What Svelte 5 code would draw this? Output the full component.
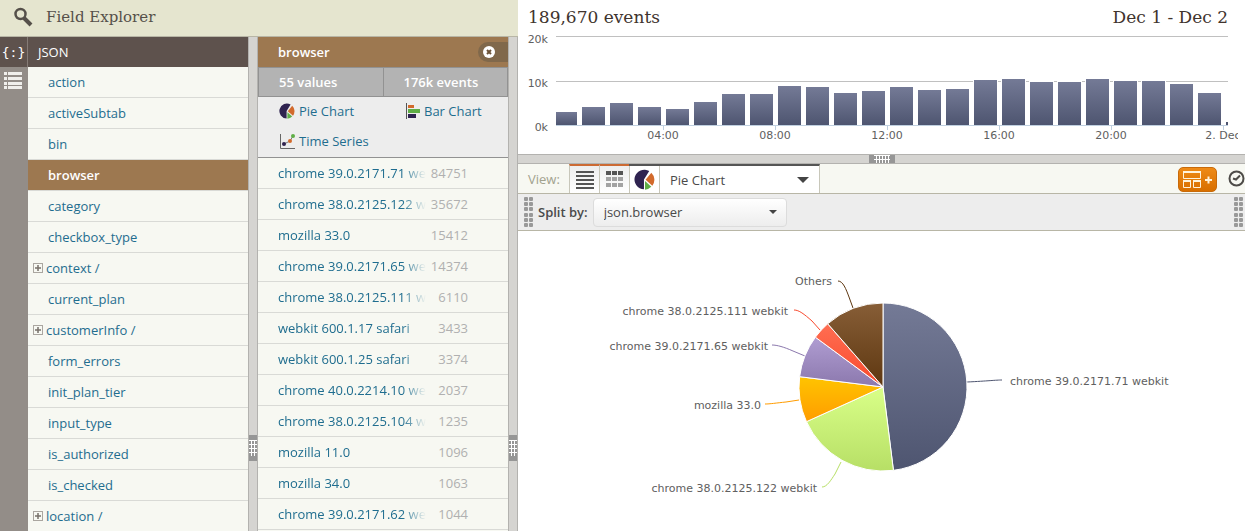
<script lang="ts">
  type Field = { name: string; group?: boolean };

  const fields: Field[] = [
    { name: "action" },
    { name: "activeSubtab" },
    { name: "bin" },
    { name: "browser" },
    { name: "category" },
    { name: "checkbox_type" },
    { name: "context /", group: true },
    { name: "current_plan" },
    { name: "customerInfo /", group: true },
    { name: "form_errors" },
    { name: "init_plan_tier" },
    { name: "input_type" },
    { name: "is_authorized" },
    { name: "is_checked" },
    { name: "location /", group: true },
  ];

  const values: [string, number][] = [
    ["chrome 39.0.2171.71 webkit", 84751],
    ["chrome 38.0.2125.122 webkit", 35672],
    ["mozilla 33.0", 15412],
    ["chrome 39.0.2171.65 webkit", 14374],
    ["chrome 38.0.2125.111 webkit", 6110],
    ["webkit 600.1.17 safari", 3433],
    ["webkit 600.1.25 safari", 3374],
    ["chrome 40.0.2214.10 webkit", 2037],
    ["chrome 38.0.2125.104 webkit", 1235],
    ["mozilla 11.0", 1096],
    ["mozilla 34.0", 1063],
    ["chrome 39.0.2171.62 webkit", 1044],
  ];

  let selected = $state("browser");

  // bar heights in chart units, one bar per hour
  const hours = [13, 18, 22, 18, 16, 23, 31, 31, 39, 38, 32, 34, 38, 35, 36, 45, 46, 43, 43, 46, 44, 44, 41, 32];
  const ticks = ["04:00", "08:00", "12:00", "16:00", "20:00", "2. Dec"];

  const total = 176500;
  const slices = [
    { name: "chrome 39.0.2171.71 webkit", n: 84751, from: "#747a96", to: "#4e5570", x: 492, y: 154, anchor: "start", line: "M484 149 C478 149 470 150 449 151" },
    { name: "chrome 38.0.2125.122 webkit", n: 35672, from: "#d9ff88", to: "#b7df66", x: 299, y: 261, anchor: "end", line: "M304 256 C309 256 313 249 317 243 L323 231" },
    { name: "mozilla 33.0", n: 15412, from: "#ffc400", to: "#ff9c00", x: 243, y: 178, anchor: "end", line: "M247 173 C252 173 258 172 268 171 L281 169" },
    { name: "chrome 39.0.2171.65 webkit", n: 14374, from: "#b09dd2", to: "#8b78ad", x: 250, y: 119, anchor: "end", line: "M254 114 C259 114 266 116 275 120 L287 125" },
    { name: "chrome 38.0.2125.111 webkit", n: 6110, from: "#ff6e52", to: "#f9492d", x: 270, y: 84, anchor: "end", line: "M276 79 C281 79 286 83 294 90 L302 99" },
    { name: "Others", n: 20181, from: "#875e37", to: "#5e3710", x: 314, y: 54, anchor: "end", line: "M320 50 C325 50 328 58 331 66 L335 77" },
  ];

  const cx = 365;
  const cy = 156;
  const r = 84;

  function point(n: number): string {
    const a = (n / total) * Math.PI * 2;
    return `${cx + r * Math.sin(a)} ${cy - r * Math.cos(a)}`;
  }

  const wedges = $derived.by(() => {
    let sum = 0;
    return slices.map((s) => {
      const start = sum;
      sum += s.n;
      return { ...s, d: `M${cx} ${cy} L${point(start)} A${r} ${r} 0 0 1 ${point(sum)} Z` };
    });
  });
</script>

{#snippet pieIcon()}
  <svg class="pie-icon" viewBox="0 0 20 20" aria-hidden="true">
    <path d="M9.500 10 L14.500 2 A9.300 9.300 0 1 0 9.500 19.300 Z" fill="#2f2350" />
    <path d="M11 10.300 L16.500 3.500 A9.500 9.500 0 0 1 17.500 16 Z" fill="#d26a2c" />
    <path d="M10.500 11.500 L16.500 17 A9.500 9.500 0 0 1 10.500 19.700 Z" fill="#5fae46" />
  </svg>
{/snippet}

{#snippet grip()}
  <svg class="grip" width="10" height="32" viewBox="0 0 10 32" aria-hidden="true">
    {#each [1, 6, 11, 17, 22, 27] as y}
      <rect x="0" {y} width="4" height="4" rx="1" />
      <rect x="5" {y} width="4" height="4" rx="1" />
    {/each}
  </svg>
{/snippet}

<div class="app">
  <section class="explorer">
    <header class="explorer-head">
      <svg width="20" height="20" viewBox="0 0 20 20" fill="none" stroke="#55504a" aria-hidden="true">
        <circle cx="6.500" cy="7" r="5" stroke-width="2.500" />
        <path d="M10 11 L17 18" stroke-width="4" />
      </svg>
      <h1>Field Explorer</h1>
    </header>

    <div class="panes">
      <nav class="rail">
        <button class="json-tab" aria-label="JSON fields">&#123;:&#125;</button>
        <button class="list-tab" aria-label="Event list">
          <svg width="18" height="17" viewBox="0 0 18 17" fill="#f0efec">
            {#each [0, 5, 10, 14] as y}
              <rect x="0" {y} width="3" height="3" />
              <rect x="4" {y} width="14" height="3" />
            {/each}
          </svg>
        </button>
      </nav>

      <div class="fields">
        <h2>JSON</h2>
        <ul>
          {#each fields as field}
            <li class:active={field.name === selected}>
              <button class="field" class:group={field.group} onclick={() => (selected = field.name)}>
                {#if field.group}
                  <svg width="10" height="10" viewBox="0 0 10 10" fill="none" aria-hidden="true">
                    <rect x=".5" y=".5" width="9" height="9" stroke="#aaa6a0" />
                    <path d="M2 5 H8 M5 2 V8" stroke="#77706a" stroke-width="1.5" />
                  </svg>
                {/if}
                {field.name}
              </button>
            </li>
          {/each}
        </ul>
      </div>

      <div class="splitter"><span class="handle"></span></div>

      <div class="values">
        <div class="values-head">
          <h2>{selected}</h2>
          <button class="close" aria-label="Close">
            <svg width="12" height="12" viewBox="0 0 12 12">
              <circle cx="6" cy="6" r="6" fill="#fff" />
              <path d="M4 4 L8 8 M8 4 L4 8" stroke="#6b5238" stroke-width="2" />
            </svg>
          </button>
        </div>
        <div class="totals">
          <span>55 values</span>
          <span>176k events</span>
        </div>
        <div class="charts">
          <a href="#pie">{@render pieIcon()}Pie Chart</a>
          <a href="#bar">
            <svg width="14" height="16" viewBox="0 0 14 16" aria-hidden="true">
              <rect x="0" y="0" width="1" height="16" fill="#555" />
              <rect x="2" y="2" width="6" height="3" fill="#d26a2c" />
              <rect x="2" y="6" width="12" height="4" fill="#5fae46" />
              <rect x="2" y="11" width="8" height="4" fill="#2f2350" />
            </svg>Bar Chart
          </a>
          <a href="#time">
            <svg width="16" height="16" viewBox="0 0 16 16" aria-hidden="true">
              <path d="M1.500 1 V15.500 H16" fill="none" stroke="#666" />
              <path d="M5 11 L11 8 L14 3" fill="none" stroke="#777" />
              <circle cx="5" cy="11" r="2" fill="#2f2350" />
              <circle cx="11" cy="8" r="2" fill="#d26a2c" />
              <circle cx="14" cy="3" r="2" fill="#5fae46" />
            </svg>Time Series
          </a>
        </div>
        <ul>
          {#each values as [name, count]}
            <li class="value">
              <a href="#value">{name}</a>
              <span>{count}</span>
            </li>
          {/each}
        </ul>
      </div>

      <div class="splitter"><span class="handle"></span></div>
    </div>
  </section>

  <main>
    <header class="summary">
      <h2>189,670 events</h2>
      <h2>Dec 1 - Dec 2</h2>
    </header>

    <svg class="timeline" viewBox="0 0 720 120" role="img" aria-label="Events per hour">
      <defs>
        <linearGradient id="bar" x1="0" y1="0" x2="0" y2="1">
          <stop offset="0" stop-color="#747a96" />
          <stop offset="1" stop-color="#4e5570" />
        </linearGradient>
      </defs>
      <path d="M38 2.500 H710 M38 47.500 H710" stroke="#c0c0c0" />
      <text x="30" y="9" text-anchor="end">20k</text>
      <text x="30" y="53" text-anchor="end">10k</text>
      <text x="30" y="97" text-anchor="end">0k</text>
      {#each hours as h, i}
        <rect x={i === 0 ? 38 : 36 + i * 28} y={91 - h} width={i === 0 ? 21 : 23} height={h} fill="url(#bar)" stroke="#fff" paint-order="stroke" stroke-width="2" />
      {/each}
      <rect x="708" y="88" width="2" height="3" fill="#4e5570" />
      <path d="M38 91.500 H710" stroke="#c0d0e0" />
      {#each ticks as tick, i}
        <path d="M{145.5 + i * 112} 92 V96" stroke="#c0d0e0" />
        <text x={145 + i * 112} y="105" text-anchor="middle">{tick}</text>
      {/each}
    </svg>

    <div class="splitter across"><span class="handle"></span></div>

    <div class="view-bar">
      <label for="view">View:</label>
      <button class="mode" aria-label="List view">
        <svg width="18" height="18" viewBox="0 0 18 18" fill="#555">
          {#each [0, 4, 8, 12, 16] as y}
            <rect x="0" {y} width="18" height="2" />
          {/each}
        </svg>
      </button>
      <button class="mode" aria-label="Grid view">
        <svg width="18" height="18" viewBox="0 0 18 18">
          {#each [0, 6, 12] as y}
            {#each [0, 6, 12] as x}
              <rect {x} {y} width="5" height="4" fill={y === 0 ? "#555" : "#a3a3a3"} />
            {/each}
          {/each}
        </svg>
      </button>
      <div class="view-kind">
        <span class="kind-icon">{@render pieIcon()}</span>
        <span class="pick">
          <select id="view">
            <option>Pie Chart</option>
            <option>Bar Chart</option>
            <option>Time Series</option>
          </select>
          <svg class="arrow" width="12" height="6" viewBox="0 0 12 6"><path d="M0 0 H12 L6 6 Z" /></svg>
        </span>
      </div>
      <button class="dashboard" aria-label="Add to dashboard">
        <svg width="30" height="17" viewBox="0 0 30 17" fill="none" stroke="#fff3dc">
          <path d="M.5 1 H17.500 V7.500 H.5 Z M.5 10 H7.500 V16.500 H.5 Z M10.500 10 H17.500 V16.500 H10.500 Z" />
          <path d="M0 1 H18 M0 10 H8 M10 10 H18" stroke-width="2" />
          <path d="M22 9 H29 M25.500 5.500 V12.500" stroke-width="2" />
        </svg>
      </button>
      <button class="clock" aria-label="Time range">
        <svg width="17" height="17" viewBox="0 0 17 17" fill="none" stroke="#4d4b48" stroke-width="2">
          <circle cx="8.500" cy="8.500" r="7" />
          <path d="M5 8.500 L8 9.500 L12 5.500" />
        </svg>
      </button>
    </div>

    <div class="split-bar">
      {@render grip()}
      <label for="split">Split by:</label>
      <span class="pick split">
        <select id="split">
          <option>json.browser</option>
          <option>json.category</option>
        </select>
        <svg class="arrow" width="8" height="4" viewBox="0 0 8 4"><path d="M0 0 H8 L4 4 Z" /></svg>
      </span>
      <span class="end">{@render grip()}</span>
    </div>

    <svg class="pie" viewBox="0 0 727 300" role="img" aria-label="Events by browser">
      {#each wedges as w, i}
        <linearGradient id="slice{i}" x1="0" y1="0" x2="0" y2="1">
          <stop offset="0" stop-color={w.from} />
          <stop offset="1" stop-color={w.to} />
        </linearGradient>
        <path d={w.line} fill="none" stroke={w.to} />
        <path d={w.d} fill="url(#slice{i})" stroke="#fff" stroke-linejoin="round" />
        <text x={w.x} y={w.y} text-anchor={w.anchor}>{w.name}</text>
      {/each}
    </svg>
  </main>
</div>

<style>
  :global(body) {
    background: #fff;
    font-family: "Open Sans", "Noto Sans", sans-serif;
    font-size: 13px;
    color: #4a4a4a;
  }

  .app {
    display: flex;
    height: 100vh;
    overflow: hidden;
  }

  h1,
  h2,
  ul {
    margin: 0;
    padding: 0;
  }

  ul {
    list-style: none;
  }

  button,
  select {
    font: inherit;
    color: inherit;
    margin: 0;
    padding: 0;
    border: 0;
    background: none;
    cursor: pointer;
  }

  button {
    display: flex;
    align-items: center;
    justify-content: center;
  }

  a {
    color: #1f6d8f;
    text-decoration: none;
  }

  /* left side */
  .explorer {
    flex: none;
    display: flex;
    flex-direction: column;
  }

  .explorer-head {
    box-sizing: border-box;
    display: flex;
    align-items: center;
    gap: 12px;
    height: 37px;
    padding: 0 14px 2px;
    background: #e5e5cf;
    border-bottom: 1px solid #b8b6a6;
  }

  h1,
  .summary h2 {
    font-family: "DejaVu Serif", serif;
    font-weight: 400;
  }

  h1 {
    font-size: 15px;
    line-height: 24px;
    color: #55504a;
  }

  .panes {
    flex: 1;
    min-height: 0;
    display: flex;
  }

  .rail {
    width: 28px;
    background: #938d88;
  }

  .json-tab {
    box-sizing: border-box;
    width: 28px;
    height: 30px;
    background: #5e524d;
    border-right: 1px solid #857b76;
    font-family: "DejaVu Sans Mono", monospace;
    font-size: 13px;
    color: #fff;
  }

  .list-tab {
    width: 26px;
    height: 27px;
  }

  .fields {
    width: 220px;
    background: #f7f8f2;
  }

  .fields h2 {
    padding-left: 10px;
    background: #5e524d;
    color: #fff;
    font-size: 13px;
    font-weight: 400;
    line-height: 30px;
  }

  .fields li {
    border-bottom: 1px solid #d9dad6;
  }

  .field {
    width: 100%;
    height: 30px;
    justify-content: flex-start;
    padding-left: 20px;
    color: #1f6d8f;
  }

  .field.group {
    gap: 3px;
    padding-left: 5px;
  }

  .active .field {
    background: #9d7850;
    color: #fff;
    font-weight: 600;
  }

  .splitter {
    box-sizing: border-box;
    display: flex;
    justify-content: center;
    width: 10px;
    padding-top: 398px;
    background: #d5d4d1;
    border: solid #b3b2af;
    border-width: 0 1px;
  }

  .handle {
    box-sizing: border-box;
    width: 8px;
    height: 26px;
    border: solid #969696;
    border-width: 5px 0;
    background:
      repeating-linear-gradient(to right, transparent 0 2px, #fff 2px 3px),
      repeating-linear-gradient(#fff 0 1px, #969696 1px 4px);
  }

  .values {
    width: 250px;
    background: #f7f8f2;
  }

  .values-head {
    display: flex;
    align-items: center;
    justify-content: space-between;
    height: 30px;
    padding-left: 20px;
    background: #9d7850;
    color: #fff;
  }

  .values-head h2 {
    font-size: 13px;
    font-weight: 600;
  }

  .close {
    width: 30px;
    height: 20px;
    padding-right: 8px;
    box-sizing: border-box;
    background: #80684b;
    border-radius: 10px 0 0 10px;
  }

  .totals {
    display: flex;
    border: 1px solid #929292;
    background: #b3b3b3;
    color: #fff;
    font-weight: 600;
    line-height: 28px;
  }

  .totals span {
    flex: 1;
    padding-left: 20px;
  }

  .totals span + span {
    border-left: 1px solid #929292;
  }

  .charts {
    display: grid;
    grid-template-columns: 127px 1fr;
    padding-left: 21px;
    background: #ededed;
    border-bottom: 1px solid #929292;
  }

  .charts a {
    display: flex;
    align-items: center;
    gap: 4px;
    height: 28px;
    padding-bottom: 2px;
  }

  .pie-icon {
    width: 16px;
    height: 16px;
  }

  .value {
    display: flex;
    justify-content: space-between;
    padding: 0 40px 0 20px;
    line-height: 30px;
    border-bottom: 1px solid #d9dad6;
  }

  .value a {
    width: 148px;
    overflow: hidden;
    white-space: nowrap;
    mask-image: linear-gradient(to right, #000 124px, transparent);
  }

  .value span {
    color: #b0b0b0;
  }

  /* right side */
  main {
    flex: 1;
    min-width: 0;
  }

  .summary {
    display: flex;
    justify-content: space-between;
    height: 34px;
    padding: 0 17px 0 10px;
  }

  .summary h2 {
    font-size: 17px;
    line-height: 35px;
    color: #40342e;
  }

  .timeline {
    display: block;
    width: calc(100% - 7px);
  }

  text {
    font-family: "Lucida Grande", "DejaVu Sans", sans-serif;
    font-size: 11px;
    fill: #606060;
  }

  .across {
    width: auto;
    height: 10px;
    padding: 0;
    border-width: 1px 0;
  }

  .across .handle {
    width: 26px;
    height: 8px;
    border-width: 0 5px;
  }

  .view-bar {
    display: flex;
    height: 29px;
    background: #f7f8f2;
    border-bottom: 1px solid #b8b6a6;
  }

  .view-bar label {
    width: 41px;
    padding-left: 10px;
    line-height: 30px;
    color: #a2a28e;
  }

  .mode {
    width: 30px;
    border-top: 2px solid #cc6a33;
    border-left: 1px solid #c8c7ba;
    background: linear-gradient(#eee, #fff);
  }

  .view-kind {
    display: flex;
    border-top: 2px solid #555;
    border-right: 1px solid #c8c7ba;
    background: #fff;
  }

  .kind-icon {
    box-sizing: border-box;
    display: flex;
    align-items: center;
    justify-content: center;
    width: 31px;
    border: solid #c8c7ba;
    border-width: 0 1px;
  }

  .kind-icon .pie-icon {
    width: 21px;
    height: 21px;
  }

  .pick {
    display: flex;
    align-items: center;
    position: relative;
  }

  .pick select {
    appearance: none;
    width: 159px;
    height: 27px;
    padding-left: 10px;
  }

  .arrow {
    position: absolute;
    right: 10px;
    fill: #444;
    pointer-events: none;
  }

  .dashboard {
    width: 39px;
    height: 25px;
    margin: 3px 11px 0 auto;
    border: 1px solid #c86a0a;
    border-radius: 5px;
    box-sizing: border-box;
    background: linear-gradient(#ee8a16, #d86f00);
  }

  .clock {
    width: 17px;
  }

  .split-bar {
    display: flex;
    align-items: center;
    height: 36px;
    padding: 0 1px 0 6px;
    background: #ededed;
    border-bottom: 1px solid #b8b6a6;
  }

  .split-bar label {
    margin: 0 5px 0 4px;
    font-weight: 600;
  }

  .grip {
    display: block;
    fill: #999;
  }

  .pick.split select {
    width: 194px;
    height: 29px;
    border: 1px solid #dcdcdc;
    border-radius: 4px;
    background: linear-gradient(#fff, #ededed);
  }

  .end {
    margin-left: auto;
  }

  .pie {
    display: block;
    width: 100%;
  }
</style>
